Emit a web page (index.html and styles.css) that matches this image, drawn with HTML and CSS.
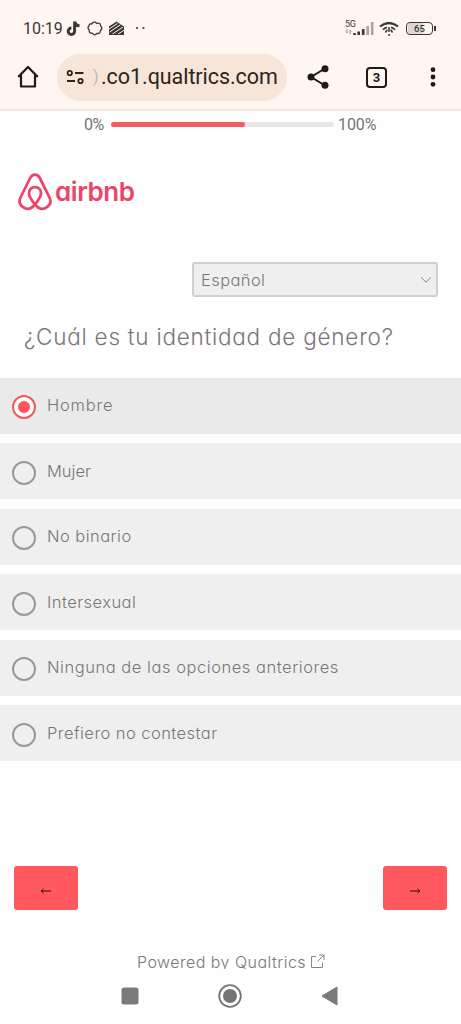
FILE: index.html
```html
<!DOCTYPE html>
<html lang="es">
<head>
<meta charset="utf-8">
<meta name="viewport" content="width=device-width, initial-scale=1">
<title>Encuesta</title>
<link rel="stylesheet" href="styles.css">
</head>
<body>
<header class="browser">
  <div class="status">
    <span class="clock">10:19</span>
    <svg class="notifications" width="84" height="18" viewBox="0 0 84 18">
      <path d="M8.600 1.500v9.800a3.200 3.200 0 1 1-3.200-3.200M8.600 1.500c.3 2.800 2 4.100 4.900 4.300" fill="none" stroke="#3b3735" stroke-width="3"/>
      <path d="M25.500 4Q28 .8 30.700 3.300Q34.600 2.300 34.700 6Q37.200 8.500 34.400 10.600Q34.300 14 31 13.400Q28.500 16.200 26.300 13.200Q22.700 13.400 23.200 10Q20.800 7.300 23.200 5.600Q23 3.500 25.500 4Z" fill="none" stroke="#3b3735" stroke-width="1.300"/>
      <path d="M43 6.500 50.500 1.500l7.500 5V15H43z" fill="#3b3735"/>
      <path d="m43 9 8.500-5.500M43.500 12l11-7.300M46.500 14 57 7M52 14l6-3.700" stroke="#fef5f1" stroke-width="1"/>
      <circle cx="71" cy="8" r="1.100" fill="#3b3735"/><circle cx="77.500" cy="8" r="1.100" fill="#3b3735"/>
    </svg>
    <div class="signals">
      <div class="network"><span>5G</span><svg width="7" height="5" viewBox="0 0 7 5"><path d="M2 0v4L.5 2.500M5 5V1l1.500 1.500" fill="none" stroke="#8d8784" stroke-width=".9"/></svg></div>
      <svg width="22" height="14" viewBox="0 0 22 14"><path d="M1.500 11v2M5.700 9.500V13M10.200 7v6" stroke="#3b3735" stroke-width="2.600"/><path d="M14.700 4v9M19.200 0v13" stroke="#aaa4a1" stroke-width="2.600"/></svg>
      <svg class="wifi" width="20" height="14" viewBox="0 0 20 14"><path d="M1 4.500Q10-2.500 19 4.500" fill="none" stroke="#3b3735" stroke-width="2.200"/><path d="M4 7.800Q5.500 5.800 8 5.300M16 7.800Q14.500 5.800 12 5.300M6.500 10.500Q7.300 8.500 8.500 8M13.500 10.500Q12.700 8.500 11.500 8" fill="none" stroke="#3b3735" stroke-width="1.700"/><path d="M10 5v5M10 12v2" stroke="#3b3735" stroke-width="1.500"/></svg>
      <div class="battery">65</div><i class="battery-tip"></i>
    </div>
  </div>
  <div class="toolbar">
    <svg class="home" width="22" height="24" viewBox="0 0 22 24"><path d="M1.200 12 11 2l9.800 10M4 10v11.500h14V10" fill="none" stroke="#1e1a18" stroke-width="2.200" stroke-linejoin="round"/></svg>
    <div class="address">
      <svg width="20" height="16" viewBox="0 0 20 16" fill="none" stroke="#2c2421" stroke-width="1.800"><circle cx="3.800" cy="4" r="2.200"/><path d="M9 4h8.500M1 12h8"/><circle cx="14.500" cy="12" r="2.200"/></svg>
      <span class="cut">)</span><span class="url">.co1.qualtrics.com</span>
    </div>
    <svg class="share" width="22" height="24" viewBox="0 0 22 24"><path d="M18 3.500 4 12l14 8.500" fill="none" stroke="#1e1a18" stroke-width="2"/><g fill="#1e1a18"><circle cx="18" cy="3.800" r="3.500"/><circle cx="4" cy="12" r="3.500"/><circle cx="18" cy="20.200" r="3.500"/></g></svg>
    <div class="tabs">3</div>
    <svg class="more" width="6" height="20" viewBox="0 0 6 20" fill="#1e1a18"><circle cx="3" cy="2.700" r="2.400"/><circle cx="3" cy="10" r="2.400"/><circle cx="3" cy="17.300" r="2.400"/></svg>
  </div>
</header>
<main class="survey">
  <div class="progress"><span class="low">0%</span><div class="track"><div class="fill"></div></div><span class="high">100%</span></div>
  <div class="brand">
    <svg width="36" height="38" viewBox="0 0 36 38"><path d="M18 31.500C14 26.500 12 23.500 12 20.200C12 16.500 14.500 14.200 18 14.200S24 16.500 24 20.200C24 23.500 22 26.500 18 31.500C14.500 35.500 11 37 7.500 35C3 32.800 1.300 29 3.500 24.500L13.200 5C14.500 2.500 16 1.700 18 1.700S21.500 2.500 22.800 5L32.500 24.500C34.700 29 33 32.800 28.500 35C25 37 21.500 35.500 18 31.500Z" fill="none" stroke="#eb4668" stroke-width="2.800"/></svg>
    <span class="brand-name">airbnb</span>
  </div>
  <div class="language"><span>Español</span><svg width="12" height="8" viewBox="0 0 12 8"><path d="m1 1.300 5 4.900 5-4.900" fill="none" stroke="#888" stroke-width="1"/></svg></div>
  <h1 class="question"><span>¿Cuál es tu identidad de género?</span></h1>
  <div class="options">
    <label class="option selected"><i class="radio"></i><span class="wide">Hombre</span></label>
    <label class="option"><i class="radio"></i><span class="snug">Mujer</span></label>
    <label class="option"><i class="radio"></i><span>No binario</span></label>
    <label class="option"><i class="radio"></i><span>Intersexual</span></label>
    <label class="option"><i class="radio"></i><span class="long">Ninguna de las opciones anteriores</span></label>
    <label class="option"><i class="radio"></i><span>Prefiero no contestar</span></label>
  </div>
  <div class="actions">
    <button aria-label="Anterior"><svg width="12" height="8" viewBox="0 0 12 8"><path d="M11 4H1M3.500 1.800 1.200 4l2.300 2.200" fill="none" stroke="#321014"/></svg></button>
    <button aria-label="Siguiente"><svg width="12" height="8" viewBox="0 0 12 8"><path d="M1 4h10M8.500 1.800 10.800 4 8.500 6.200" fill="none" stroke="#321014"/></svg></button>
  </div>
  <div class="powered"><span>Powered by Qualtrics</span><svg width="15" height="15" viewBox="0 0 15 15"><path d="M6 2.500H1.500v11h11V8.500M9 1h5v5M14 1 7.500 7.500" fill="none" stroke="#858585" stroke-width="1"/></svg></div>
</main>
<nav class="system">
  <svg width="18" height="18"><rect x=".5" y=".5" width="17" height="17" rx="2.500" fill="#7b7b7b"/></svg>
  <svg width="24" height="24"><circle cx="12" cy="12" r="10.800" fill="none" stroke="#747474" stroke-width="1.800"/><circle cx="12" cy="12" r="7" fill="#747474"/></svg>
  <svg width="17" height="20"><path d="M16 1v18L1 10z" fill="#7b7b7b" stroke="#7b7b7b" stroke-linejoin="round"/></svg>
</nav>
</body>
</html>
```
FILE: styles.css
```css
* { box-sizing: border-box; }
body { margin: 0; width: 461px; height: 1024px; overflow: hidden; display: flex; flex-direction: column; background: #fefefe; color: #777; font-family: Inter, sans-serif; font-feature-settings: "cv11"; }
svg { display: block; flex: none; }
span { white-space: nowrap; }
.browser { height: 111px; background: #fff6f2; border-bottom: 2px solid #f2e8e2; flex: none; }
.status { height: 53px; padding: 4px 25px 0 23px; display: flex; align-items: center; color: #3b3735; }
.clock { font: 400 16px/20px Roboto, sans-serif; width: 42px; letter-spacing: 0; }
.notifications { margin-left: 1px; }
.signals { margin-left: auto; display: flex; align-items: center; }
.network { font: 9px/9px Roboto, sans-serif; width: 8px; height: 17px; letter-spacing: -.3px; }
.wifi { margin: 0 7px 0 4px; }
.battery { width: 27px; height: 13px; border: 1.5px solid #3b3735; border-radius: 4px; font: 500 9.5px/11px Roboto, sans-serif; text-align: center; background: linear-gradient(90deg, #ddd6d2 65%, transparent 65%); background-clip: content-box; padding: 0 1px; }
.battery-tip { width: 2px; height: 5px; margin-left: 1px; background: #3b3735; }
.toolbar { display: flex; align-items: center; height: 48px; padding-right: 25px; }
.home { margin-left: 17px; }
.address { width: 230px; height: 47px; margin-left: 18px; border-radius: 24px; background: #f6e5d8; display: flex; align-items: center; padding-left: 9px; color: #2c2421; font: 21.5px/28px Roboto, sans-serif; }
.cut { width: 8px; margin-left: 7px; color: #c5b5aa; font-size: 16px; }
.url { letter-spacing: -.06px; }
.share { margin-left: 20px; }
.tabs { width: 21px; height: 21px; margin-left: 37px; border: 2px solid #1e1a18; border-radius: 4px; color: #1e1a18; font: 700 13px/17px Roboto, sans-serif; text-align: center; }
.more { margin-left: auto; }
.survey { flex: 1; display: flex; flex-direction: column; }
.progress { display: flex; align-items: center; height: 27px; padding-left: 84px; color: #747474; font: 16px/20px Roboto, sans-serif; }
.low { width: 27px; letter-spacing: -.6px; }
.high { letter-spacing: -.1px; }
.track { width: 223px; height: 5px; border-radius: 3px; background: #e7e7e7; margin-right: 4px; }
.fill { width: 134px; height: 5px; border-radius: 3px; background: #f05e65; }
.brand { display: flex; align-items: center; height: 38px; margin: 35px 0 0 17px; color: #eb4668; }
.brand-name { margin-left: 2px; font-size: 26px; font-weight: 600; letter-spacing: -.45px; line-height: 36px; }
.language { display: flex; align-items: center; justify-content: space-between; width: 246px; height: 35px; margin: 51px 0 0 192px; padding: 0 4px 0 7px; border: 2px solid #d0d0d0; border-radius: 3px; background: #efefef; font-size: 16.5px; font-weight: 300; letter-spacing: .4px; }
.question { margin: 25px 0 0 24px; height: 30px; font-size: 22.5px; line-height: 30px; font-weight: 300; letter-spacing: .76px; }
.options { display: grid; gap: 9.5px; margin-top: 25.5px; }
.option { height: 56px; display: flex; align-items: center; padding: 0 12px; background: #efefef; font-size: 16.5px; font-weight: 300; letter-spacing: .45px; }
.option.selected { background: #eaeaea; }
.option span { margin: 0 0 1px 11px; }
.wide { letter-spacing: .8px; }
.snug { letter-spacing: 0; }
.long { letter-spacing: .54px; }
.radio { width: 24px; height: 24px; margin-top: 3px; border: 2px solid #999; border-radius: 50%; flex: none; display: grid; place-items: center; }
.selected .radio { border-color: #ee5961; background: #fff; }
.selected .radio::after { content: ""; width: 12px; height: 12px; border-radius: 50%; background: #ff535b; }
.actions { display: flex; justify-content: space-between; margin: 105px 14px 0; }
button { width: 64px; height: 44px; padding: 5px 0 0; border: 0; border-radius: 3px; background: #ff595f; display: grid; place-items: center; }
.powered { display: flex; align-items: flex-start; height: 17px; margin: 42px 0 0 137px; font-size: 16px; line-height: 20px; font-weight: 300; letter-spacing: .47px; overflow: hidden; gap: 4px; }
.powered svg { margin-top: 2px; }
.system { height: 55px; flex: none; display: flex; align-items: center; padding: 0 0 2px 121px; }
.system svg:nth-child(2) { margin-left: 79px; }
.system svg:nth-child(3) { margin-left: 79px; }
```
